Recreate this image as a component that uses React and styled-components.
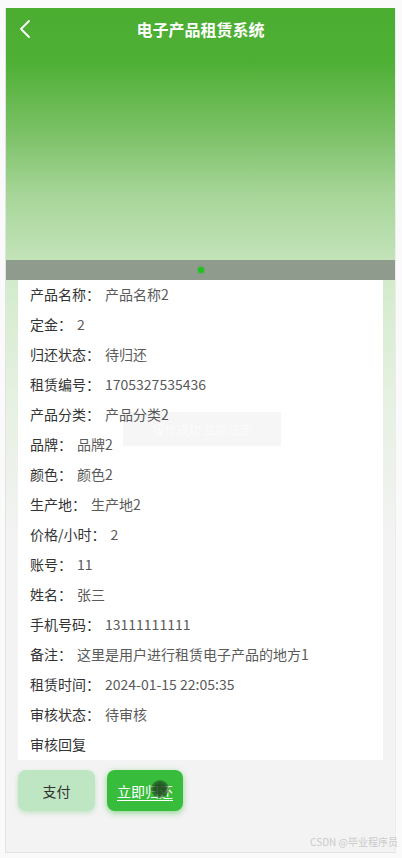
import React from "react";
import styled, { createGlobalStyle } from "styled-components";

const Global = createGlobalStyle`
  html, body { margin: 0; padding: 0; background: #fafafa; }
  body { font-family: "Noto Sans CJK SC", "Noto Sans", sans-serif; }
`;

const Phone = styled.div`
  position: relative;
  box-sizing: border-box;
  width: 391px;
  height: 845px;
  margin: 8px 0 0 5px;
  background: #f3f3f3;
  border-left: 1px solid #e2e2e2;
  border-bottom: 1px solid #e2e2e2;
  border-right: 1px solid #ececec;
`;

const Banner = styled.div`
  height: 252px;
  background: linear-gradient(180deg, #4aad30 0%, #4fb036 22%, #7cc167 50%, #a8d69a 75%, #c3e3b9 100%);
  display: flex;
  flex-direction: column;
`;

const TopBar = styled.div`
  height: 42px;
  display: flex;
  align-items: center;
  justify-content: center;
  position: relative;
`;

const Back = styled.div`
  position: absolute;
  left: 12px;
  top: 11px;
  width: 16px;
  height: 20px;
  display: flex;
`;

const Title = styled.h1`
  margin: 0;
  font-size: 16px;
  font-weight: 700;
  color: #fff;
  letter-spacing: 0;
`;

const Indicator = styled.div`
  height: 20px;
  background: #8f9b8c;
  display: flex;
  align-items: center;
  justify-content: center;
`;

const Dot = styled.span`
  width: 6px;
  height: 6px;
  border-radius: 50%;
  background: #1fc21f;
  box-shadow: 0 0 2px #1fc21f;
`;

const Body = styled.div`
  background: linear-gradient(180deg, #d3ebcc 0px, #e6f1e2 120px, #f3f3f3 260px);
  padding: 0 12px;
`;

const Card = styled.div`
  background: #fff;
  padding: 0 12px;
`;

const Row = styled.div`
  box-sizing: border-box;
  height: 30px;
  padding-bottom: 3px;
  display: flex;
  align-items: center;
  font-size: 14px;
  line-height: 20px;
`;

const Label = styled.span`
  color: #333;
  margin-right: 5px;
`;

const Value = styled.span`
  color: #5a5a5a;
`;

const Actions = styled.div`
  display: flex;
  gap: 12px;
  padding: 10px 12px 0;
`;

const Btn = styled.button`
  width: ${(p) => p.$w}px;
  height: 41px;
  border: none;
  border-radius: 8px;
  font-family: inherit;
  font-size: 14px;
  background: ${(p) => (p.$primary ? "#38bc3b" : "#bfe6c3")};
  color: ${(p) => (p.$primary ? "#fff" : "#333")};
  text-decoration: ${(p) => (p.$primary ? "underline" : "none")};
  text-underline-offset: 3px;
  box-shadow: ${(p) =>
    p.$primary ? "0 2px 6px rgba(56,188,59,0.55)" : "0 2px 5px rgba(150,210,155,0.5)"};
  position: relative;
  padding: 0;
`;

const Touch = styled.span`
  position: absolute;
  left: 44px;
  top: 10px;
  width: 18px;
  height: 18px;
  border-radius: 50%;
  background: radial-gradient(circle, rgba(30,70,30,0.85) 40%, rgba(30,70,30,0.3) 80%, rgba(30,70,30,0) 100%);
`;

const Toast = styled.div`
  position: absolute;
  left: 117px;
  top: 404px;
  width: 158px;
  height: 34px;
  background: rgba(0, 0, 0, 0.035);
  color: rgba(255, 255, 255, 0.6);
  font-size: 12px;
  display: flex;
  align-items: center;
  justify-content: center;
`;

const Watermark = styled.div`
  position: absolute;
  right: -3px;
  bottom: 3px;
  font-size: 10px;
  color: #cbcbcb;
  font-family: "Noto Sans CJK SC", "Noto Sans", sans-serif;
`;

const rows = [
  ["产品名称：", "产品名称2"],
  ["定金：", "2"],
  ["归还状态：", "待归还"],
  ["租赁编号：", "1705327535436"],
  ["产品分类：", "产品分类2"],
  ["品牌：", "品牌2"],
  ["颜色：", "颜色2"],
  ["生产地：", "生产地2"],
  ["价格/小时：", "2"],
  ["账号：", "11"],
  ["姓名：", "张三"],
  ["手机号码：", "13111111111"],
  ["备注：", "这里是用户进行租赁电子产品的地方1"],
  ["租赁时间：", "2024-01-15 22:05:35"],
  ["审核状态：", "待审核"],
  ["审核回复", ""],
];

export default function App() {
  return (
    <>
      <Global />
      <Phone>
        <Banner>
          <TopBar>
            <Back>
              <svg width="16" height="20" viewBox="0 0 16 20" fill="none">
                <path d="M11 2 L3 10 L11 18" stroke="#fff" strokeWidth="1.8" strokeLinecap="round" strokeLinejoin="round" />
              </svg>
            </Back>
            <Title>电子产品租赁系统</Title>
          </TopBar>
        </Banner>
        <Indicator>
          <Dot />
        </Indicator>
        <Body>
          <Card>
            {rows.map(([l, v]) => (
              <Row key={l}>
                <Label>{l}</Label>
                {v && <Value>{v}</Value>}
              </Row>
            ))}
          </Card>
        </Body>
        <Actions>
          <Btn $w={77}>支付</Btn>
          <Btn $w={76} $primary>
            立即归还
            <Touch />
          </Btn>
        </Actions>
        <Toast>操作成功 立即归还</Toast>
        <Watermark>CSDN @毕业程序员</Watermark>
      </Phone>
    </>
  );
}
